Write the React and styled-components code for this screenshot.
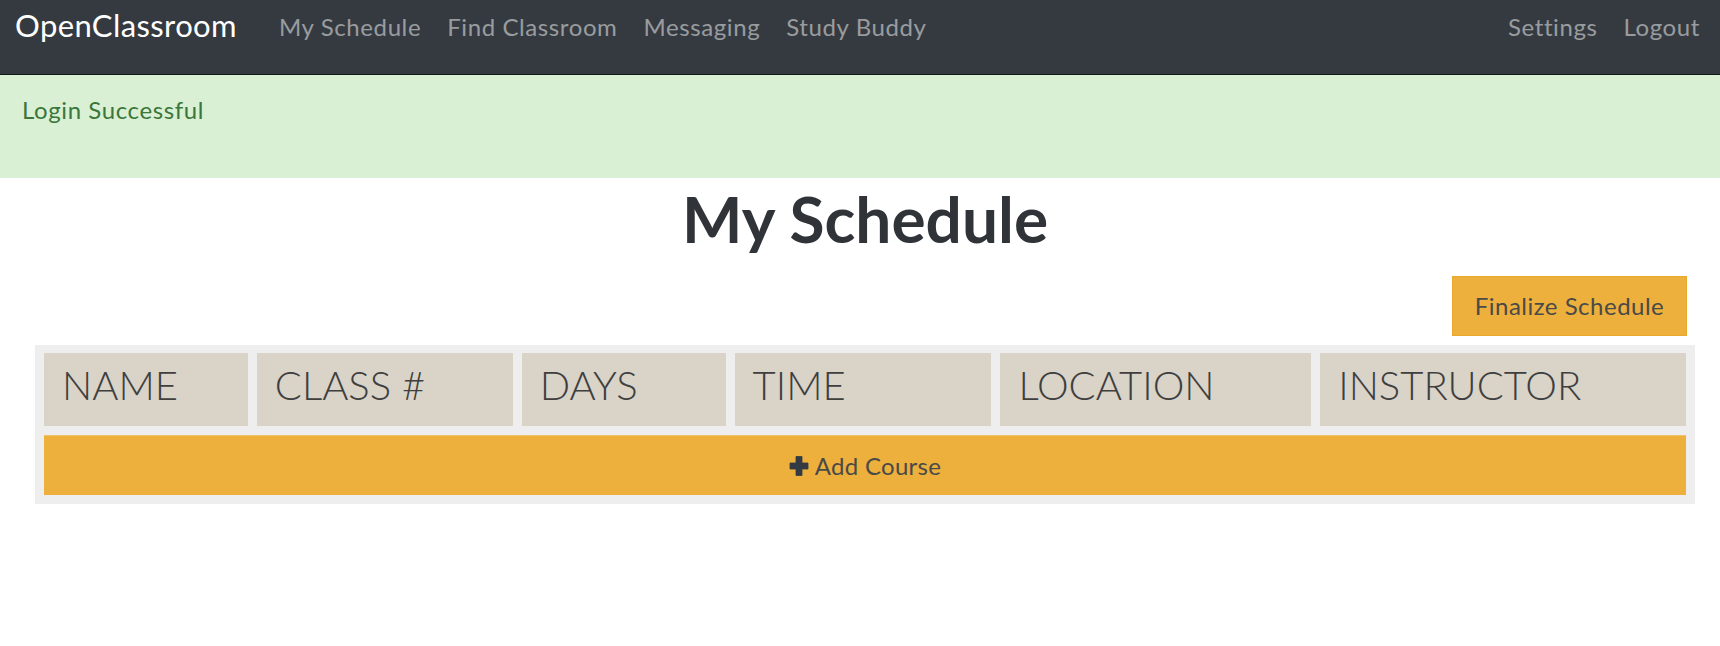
import styled, { createGlobalStyle } from "styled-components";

const GlobalStyle = createGlobalStyle`
  body {
    margin: 0;
    background: #fff;
    font-family: Lato, "Liberation Sans", sans-serif;
  }
`;

const columns = [
  { label: "NAME", width: 204 },
  { label: "CLASS #", width: 256 },
  { label: "DAYS", width: 204 },
  { label: "TIME", width: 257 },
  { label: "LOCATION", width: 311 },
  { label: "INSTRUCTOR", width: 366 },
];

const PlusIcon = () => (
  <svg width="20" height="21" viewBox="0 0 20 21">
    <path
      d="M7 1.5h6v6.5h6v6h-6v6.5h-6v-6.5h-6v-6h6z"
      fill="#333a44"
      stroke="#333a44"
      strokeWidth="0.8"
      strokeLinejoin="round"
    />
  </svg>
);

const App = () => {
  return (
    <>
      <GlobalStyle />
      <Navbar>
        <Brand>OpenClassroom</Brand>
        <NavLinks>
          <NavLink>My Schedule</NavLink>
          <NavLink>Find Classroom</NavLink>
          <NavLink>Messaging</NavLink>
          <NavLink>Study Buddy</NavLink>
        </NavLinks>
        <NavLinks $right>
          <NavLink>Settings</NavLink>
          <NavLink>Logout</NavLink>
        </NavLinks>
      </Navbar>

      <Alert>Login Successful</Alert>

      <Main>
        <Title>My Schedule</Title>
        <ButtonRow>
          <FinalizeButton>Finalize Schedule</FinalizeButton>
        </ButtonRow>

        <Schedule>
          <HeaderRow
            style={{
              gridTemplateColumns: columns.map((c) => `${c.width}fr`).join(" "),
            }}
          >
            {columns.map((col) => (
              <HeaderCell key={col.label}>{col.label}</HeaderCell>
            ))}
          </HeaderRow>
          <AddCourse>
            <PlusIcon />
            Add Course
          </AddCourse>
        </Schedule>
      </Main>
    </>
  );
};

export default App;

const Navbar = styled.nav`
  height: 74px;
  background: #343a40;
  border-bottom: 1px solid #15181b;
  display: flex;
  align-items: flex-start;
  padding: 0 7px 0 15px;
`;

const Brand = styled.a`
  color: #fff;
  font-size: 31px;
  letter-spacing: 0.4px;
  line-height: 1.2;
  padding-top: 7px;
  margin-right: 29px;
`;

const NavLinks = styled.div`
  display: flex;
  margin-left: ${(p) => (p.$right ? "auto" : "0")};
`;

const NavLink = styled.a`
  color: rgba(255, 255, 255, 0.5);
  font-size: 24px;
  letter-spacing: 0.6px;
  line-height: 1.2;
  padding: 13px 13px 0;
  cursor: pointer;
`;

const Alert = styled.div`
  box-sizing: border-box;
  height: 103px;
  background: #d9f0d5;
  color: #3b763a;
  font-size: 24px;
  letter-spacing: 0.6px;
  line-height: 1.2;
  padding: 21px 22px;
`;

const Main = styled.main`
  padding: 0 25px 0 35px;
`;

const Title = styled.h1`
  margin: 3px 0 0;
  text-align: center;
  font-size: 64px;
  font-weight: 700;
  line-height: 1.2;
  color: #303438;
`;

const ButtonRow = styled.div`
  display: flex;
  justify-content: flex-end;
  padding: 18px 8px 9px;
`;

const FinalizeButton = styled.button`
  box-sizing: border-box;
  height: 60px;
  width: 235px;
  background: #edb03d;
  border: 1px solid #eaa92c;
  color: #4a4a48;
  font-family: Lato, "Liberation Sans", sans-serif;
  font-size: 24px;
  letter-spacing: 0.5px;
  padding: 0;
  cursor: pointer;
`;

const Schedule = styled.div`
  background: #eeeeee;
  padding: 8px 9px 9px;
  display: flex;
  flex-direction: column;
  gap: 9px;
`;

const HeaderRow = styled.div`
  display: grid;
  gap: 9px;
`;

const HeaderCell = styled.div`
  height: 73px;
  background: #d9d3c8;
  color: #3f3f3f;
  font-size: 40px;
  font-weight: 300;
  line-height: 1.2;
  padding: 8px 18px 0;
  box-sizing: border-box;
  white-space: nowrap;
  overflow: hidden;
`;

const AddCourse = styled.div`
  height: 60px;
  background: #edb03d;
  border-top: 1px solid #f1c46b;
  box-sizing: border-box;
  display: flex;
  align-items: center;
  justify-content: center;
  gap: 6px;
  color: #4a4a48;
  font-size: 24px;
  letter-spacing: 0.3px;
  cursor: pointer;
`;
